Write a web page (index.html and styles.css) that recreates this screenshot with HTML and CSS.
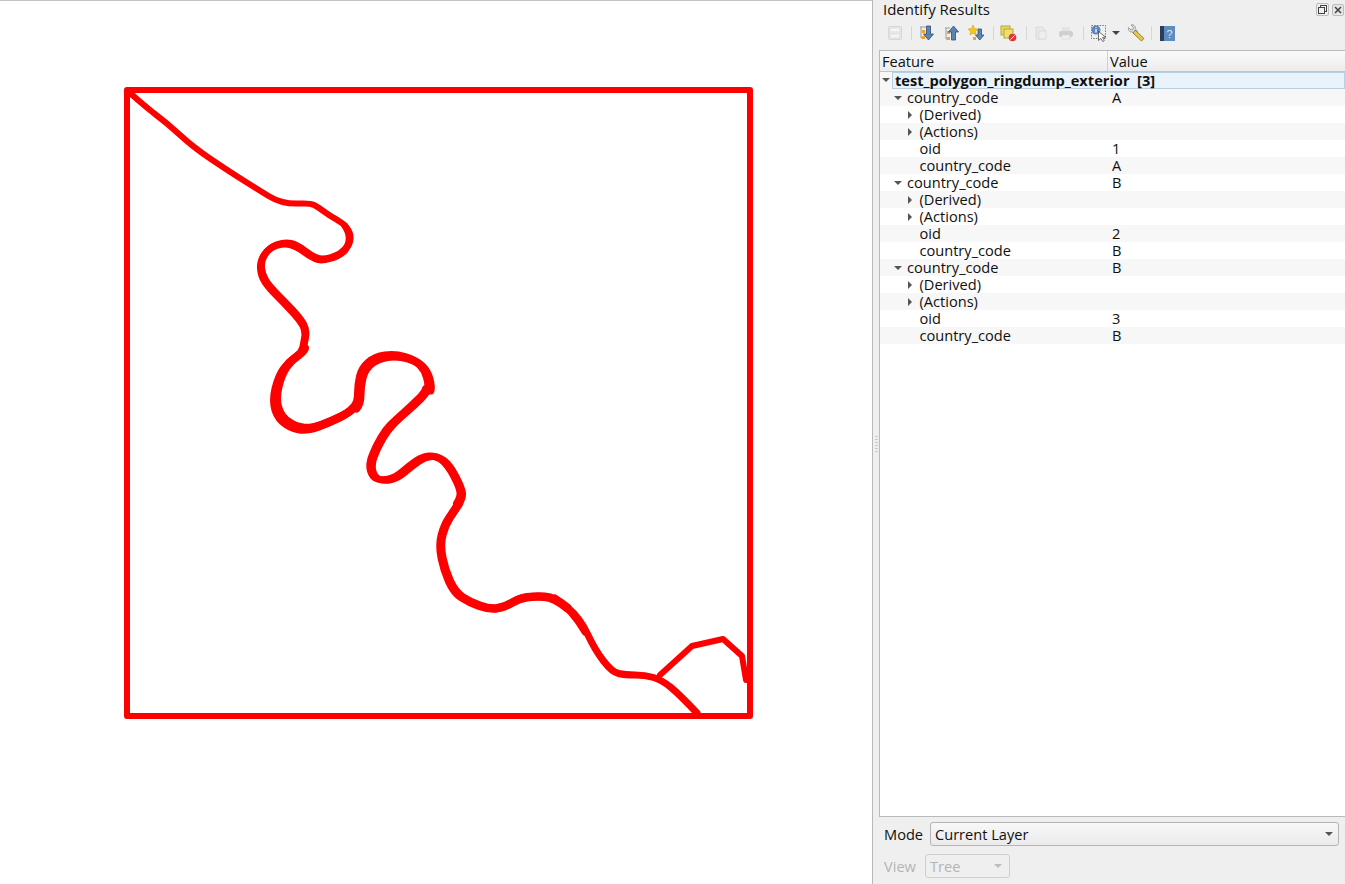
FILE: index.html
```html
<!DOCTYPE html>
<html lang="en">
<head>
<meta charset="utf-8">
<title>Identify Results</title>
<link rel="stylesheet" href="styles.css">
</head>
<body>
<div class="app">
  <main class="canvas">
    <svg class="map" viewBox="0 0 872 884" width="872" height="884">
      <defs>
        <path id="river-b" d="M345 250Q340 255 331 257.5Q322 260 317 258Q312 256 304.5 250.5Q297 245 291 243.5Q285 242 277.5 244.5Q270 247 265.5 253.5Q261 260 261.5 267.5Q262 275 266 281Q270 287 277.5 294.5Q285 302 292.5 310Q300 318 303.5 324Q307 330 305.5 337.5Q304 345 303.5 349"/>
        <path id="river-c" d="M303.5 349Q303 352 296.5 356.5Q290 361 285 368Q280 375 277 387.500Q274 400 277 409Q280 418 287.5 423Q295 428 302.5 428.5Q310 429 320 425.5Q330 422 340 417Q350 412 354 407"/>
        <path id="river-d" d="M354 407Q358 402 358 393.5Q358 385 360 376.5Q362 368 368.5 362.5Q375 357 385 355.5Q395 354 405 357Q415 360 420 365Q425 370 427 377.5Q429 385 428 389"/>
        <path id="river-e" d="M428 389Q427 393 421 399Q415 405 406.5 412.5Q398 420 393 425Q388 430 383 438.5Q378 447 374.5 456Q371 465 373 471.5Q375 478 380 479.5Q385 481 391.5 479.5Q398 478 405 472Q412 466 418.5 461.5Q425 457 431.5 456.5Q438 456 444 460.5Q450 465 456 476.5Q462 488 462.5 493Q463 498 459 504"/>
        <path id="river-f" d="M459 504Q455 510 450 517.5Q445 525 442.5 535Q440 545 442.5 557.5Q445 570 450 581Q455 592 462.5 597Q470 602 480 605.5Q490 609 497.5 608Q505 607 512.5 602.5Q520 598 527.5 597Q535 596 545 596.5Q555 597 567.5 607.5"/>
      </defs>
      <g class="feature">
        <path class="square" d="M127 90H750V716H127Z"/>
        <path class="thin" d="M127 91L133.500 96Q140 102 153 112.500Q167 123 180 135Q193 147 210 158.500Q230 172 246 182Q262 192 268.500 196Q275 200 282.500 202Q290 204 300 203.500Q310 203 314 205Q318 207 324 211.500Q330 216 336.500 219.500Q343 223 347 228Q351 233 350.500 239Q350 245 345 250"/>
        <path d="M345 226Q350 233 349 241Q348 248 342 252"/>
        <use href="#river-b"/>
        <use href="#river-b" transform="translate(-1 1)"/>
        <use class="wide" href="#river-c"/>
        <use class="wide" href="#river-c" transform="translate(-1.500 1.200)"/>
        <use class="wide" href="#river-c" transform="translate(1.500 -.8)"/>
        <use class="wide" href="#river-d"/>
        <use class="wide" href="#river-d" transform="translate(2.500 1.500)"/>
        <use href="#river-e"/>
        <use href="#river-e" transform="translate(-2.500 -.5)"/>
        <use class="wide" href="#river-f"/>
        <use class="wide" href="#river-f" transform="translate(-1 .5)"/>
        <path d="M555 598Q572 610 585 632"/>
        <path d="M567.500 607.500Q580 618 587.500 634Q595 650 603.500 661Q612 672 618.500 673.500Q625 675 635 675Q645 675 653.500 677.500Q662 680 671 687.500Q680 695 697 713"/>
        <path class="thin" d="M660 675L692 646L723 639L742 656L746 680L750 680"/>
      </g>
    </svg>
  </main>

  <aside class="panel">
    <span class="grip"></span>
    <header class="title-bar">
      <h1 class="title">Identify Results</h1>
      <div class="dock-buttons">
        <span class="dock-btn dock-float"><svg viewBox="0 0 11 11" width="11" height="11"><rect x="3.500" y="1.500" width="6" height="6" class="dk"/><rect x="1.500" y="3.500" width="6" height="6" class="dk"/></svg></span>
        <span class="dock-btn"><svg viewBox="0 0 12 12" width="12" height="12"><rect x=".5" y=".5" width="11" height="11" rx="1.500" class="dk3"/><path d="M3 3L9 9M9 3L3 9" class="dk2"/></svg></span>
      </div>
    </header>

    <div class="toolbar">
      <svg class="tool faded" viewBox="0 0 16 16" width="16" height="16"><rect x="2.500" y="1.500" width="13" height="13" rx="1" fill="#e4e4e4" stroke="#d4d4d4"/><path d="M5 5h8M5 11h8" stroke="#f7f7f7" stroke-width="2.500"/></svg>
      <i class="sep"></i>
      <svg class="tool" viewBox="0 0 16 16" width="16" height="16"><path d="M2 2h6M3 2v11h3" fill="none" stroke="#999"/><rect x="4" y="5" width="3" height="3" fill="#f0a030"/><rect x="4" y="11" width="3" height="3" fill="#f0a030"/><path d="M8.500 1h4v8h3L10.500 15 5.500 9h3Z" fill="#5b84b1" stroke="#2f4f73" stroke-width=".8"/></svg>
      <svg class="tool" viewBox="0 0 16 16" width="16" height="16"><path d="M2 3h5M3 3v11h3" fill="none" stroke="#999"/><rect x="4" y="6" width="3" height="3" fill="#f0a030"/><rect x="4" y="12" width="3" height="3" fill="#f0a030"/><path d="M8.500 15h4V7h3L10.500 1 5.500 7h3Z" fill="#5b84b1" stroke="#2f4f73" stroke-width=".8"/></svg>
      <svg class="tool" viewBox="0 0 16 16" width="16" height="16"><path d="M10 4h3.500v6H16l-4.200 5-4.300-5H10Z" fill="#5b84b1" stroke="#2f4f73" stroke-width=".8"/><path d="M5 0l1.500 3.500L10 4 7.500 6.500 8 10 5 8.200 2 10l.5-3.500L0 4l3.500-.5Z" fill="#f5c518" stroke="#c9a010" stroke-width=".5"/><rect x="5" y="12" width="3" height="3" fill="#f0a030"/></svg>
      <i class="sep"></i>
      <svg class="tool" viewBox="0 0 17 17" width="17" height="17"><rect x="1" y="1" width="9" height="9" fill="#e9d95e" stroke="#b8a83a"/><rect x="4" y="4" width="9" height="9" fill="#efe070" stroke="#b8a83a"/><circle cx="12.500" cy="12.500" r="3.800" fill="#d83a3a"/><path d="M10.500 14.500l4-4" stroke="#fff" stroke-width="1"/></svg>
      <i class="sep"></i>
      <svg class="tool" viewBox="0 0 16 16" width="16" height="16"><path d="M3 2h6l3 3v9H3Z" fill="#e9e9e9" stroke="#d8d8d8"/><rect x="6" y="6" width="7" height="8" fill="#eee" stroke="#dcdcdc"/></svg>
      <svg class="tool" viewBox="0 0 16 16" width="16" height="16"><rect x="4" y="2" width="8" height="4" fill="#e4e4e4"/><rect x="1" y="6" width="14" height="6" rx="2" fill="#cfcfcf"/><rect x="4" y="10" width="8" height="4" fill="#efefef" stroke="#d4d4d4" stroke-width=".6"/></svg>
      <i class="sep"></i>
      <svg class="tool" viewBox="0 0 18 18" width="18" height="18"><rect x="1.500" y="1.500" width="14" height="13" fill="none" stroke="#777" stroke-dasharray="1.500 1.200"/><circle cx="6" cy="6" r="4.500" fill="#5a86bd"/><path d="M6 3v.8M6 5v3.500" stroke="#fff" stroke-width="1.300"/><path d="M8.500 7.500l0 9 2.300-2 2 3 1.500-1-1.800-3 3-.5Z" fill="#fff" stroke="#333" stroke-width=".7"/></svg>
      <svg class="caret-small" viewBox="0 0 8 4" width="8" height="4"><path d="M0 0h8L4 4Z" fill="#444"/></svg>
      <svg class="tool" viewBox="0 0 18 18" width="18" height="18"><path d="M1.500 3.500L4 6l2-.5.500-2L4 1c2.500-.8 4.800 1.200 4.200 3.800L10.500 7 7.500 10 5 7.800C2.800 8.500.8 6 1.500 3.500Z" fill="#e8e8e8" stroke="#777" stroke-width=".7"/><path d="M8 6l9 8.500-2.500 2.500L6 9Z" fill="#e8c84a" stroke="#6e5d1c" stroke-width=".7"/></svg>
      <i class="sep sep-tight"></i>
      <svg class="tool tool-help" viewBox="0 0 15 15" width="15" height="15"><rect width="15" height="15" fill="#5d8cc0"/><rect width="4" height="15" fill="#2d3d52"/><text x="6.500" y="12" class="help-mark">?</text></svg>
    </div>

    <section class="tree">
      <div class="tree-head">
        <span class="col-feature">Feature</span>
        <span class="col-value">Value</span>
      </div>
      <div class="row root"><i class="arrow down a0"></i><span class="root-label">test_polygon_ringdump_exterior&nbsp; [3]</span></div>
      <div class="row alt"><span class="cell-f l1"><i class="arrow down"></i>country_code</span><span class="cell-v">A</span></div>
      <div class="row"><span class="cell-f l2"><i class="arrow right"></i>(Derived)</span><span class="cell-v"></span></div>
      <div class="row alt"><span class="cell-f l2"><i class="arrow right"></i>(Actions)</span><span class="cell-v"></span></div>
      <div class="row"><span class="cell-f l2">oid</span><span class="cell-v">1</span></div>
      <div class="row alt"><span class="cell-f l2">country_code</span><span class="cell-v">A</span></div>
      <div class="row"><span class="cell-f l1"><i class="arrow down"></i>country_code</span><span class="cell-v">B</span></div>
      <div class="row alt"><span class="cell-f l2"><i class="arrow right"></i>(Derived)</span><span class="cell-v"></span></div>
      <div class="row"><span class="cell-f l2"><i class="arrow right"></i>(Actions)</span><span class="cell-v"></span></div>
      <div class="row alt"><span class="cell-f l2">oid</span><span class="cell-v">2</span></div>
      <div class="row"><span class="cell-f l2">country_code</span><span class="cell-v">B</span></div>
      <div class="row alt"><span class="cell-f l1"><i class="arrow down"></i>country_code</span><span class="cell-v">B</span></div>
      <div class="row"><span class="cell-f l2"><i class="arrow right"></i>(Derived)</span><span class="cell-v"></span></div>
      <div class="row alt"><span class="cell-f l2"><i class="arrow right"></i>(Actions)</span><span class="cell-v"></span></div>
      <div class="row"><span class="cell-f l2">oid</span><span class="cell-v">3</span></div>
      <div class="row alt"><span class="cell-f l2">country_code</span><span class="cell-v">B</span></div>
    </section>

    <div class="form-row mode-row">
      <label class="form-label">Mode</label>
      <div class="combo combo-wide"><span>Current Layer</span><i class="combo-arrow"></i></div>
    </div>
    <div class="form-row view-row">
      <label class="form-label off">View</label>
      <div class="combo combo-off"><span>Tree</span><i class="combo-arrow"></i></div>
    </div>
  </aside>
</div>
</body>
</html>
```
FILE: styles.css
```css
* { box-sizing: border-box; }
html, body { margin: 0; height: 100%; }
body { font-family: "Open Sans", "Noto Sans", sans-serif; font-size: 14.6px; color: #101010; background: #efefef; overflow: hidden; }
.app { display: flex; width: 1345px; height: 884px; }

.canvas { width: 872px; height: 884px; background: #fff; border-top: 1px solid #c4c4c4; flex: none; overflow: hidden; }
.map { display: block; margin-top: -1px; }
.feature path, .feature use { fill: none; stroke: #ff0000; stroke-width: 7; stroke-linejoin: round; stroke-linecap: round; }
.feature .square, .feature .thin { stroke-width: 6; }
.feature .wide { stroke-width: 8; }

.panel { position: relative; width: 473px; height: 884px; flex: none; background: #efefef; border-left: 1px solid #b9b9b9; padding: 0 0 0 6px; display: flex; flex-direction: column; }
.grip { position: absolute; left: 2px; top: 436px; width: 3px; height: 18px; background: repeating-linear-gradient(#c9c9c9 0 1px, transparent 1px 3px); }

.title-bar { height: 20px; display: flex; align-items: center; justify-content: space-between; padding: 0 1px 1px 4px; }
.title { margin: 0; font-size: 15px; font-weight: 400; line-height: 19px; }
.dock-buttons { display: flex; gap: 2px; }
.dock-btn { width: 13px; height: 13px; display: flex; align-items: center; justify-content: center; }
.dock-float { border: 1px solid #bdbdbd; border-radius: 2px; }
.dk { fill: #efefef; stroke: #444; }
.dk2 { fill: none; stroke: #444; stroke-width: 1.6; }
.dk3 { fill: #e6e6e6; stroke: #bdbdbd; }

.toolbar { height: 30px; display: flex; align-items: center; padding: 0 0 4px 7px; }
.tool { flex: none; margin-right: 9px; }
.tool.faded { opacity: .9; }
.tool-help { margin-left: 2px; }
.sep { width: 1px; height: 14px; background: #d6d6d6; margin-right: 6px; flex: none; }
.sep-tight { margin-left: -3px; }
.caret-small { margin: 0 7px 0 -5px; flex: none; }
.help-mark { font-family: "Liberation Sans", sans-serif; font-size: 11px; fill: #dbe6f2; }

.tree { height: 767px; flex: none; background: #fff; border: 1px solid #b9b9b9; border-right: 0; overflow: hidden; }
.tree-head { height: 21px; display: flex; background: linear-gradient(#fafafa, #ececec); border-bottom: 1px solid #c4c4c4; line-height: 21px; }
.col-feature { width: 228px; padding-left: 2px; border-right: 1px solid #cfcfcf; }
.col-value { padding-left: 2px; }
.row { height: 17px; line-height: 17px; display: flex; background: #fff; }
.row.alt { background: #f7f7f7; }
.row.root { background: #f7f7f7; position: relative; padding-left: 12px; }
.root-label { flex: 1; background: #e8f3fb; border: 1px solid #b7cfe0; font-weight: 700; line-height: 15px; padding-left: 2px; white-space: nowrap; }
.cell-f { width: 229px; position: relative; flex: none; }
.cell-v { padding-left: 3px; }
.l1 { padding-left: 27px; }
.l2 { padding-left: 39.5px; }
.arrow { position: absolute; width: 0; height: 0; }
.arrow.down { left: 14px; top: 7px; border: 4px solid transparent; border-top: 4px solid #555; border-bottom: 0; }
.arrow.right { left: 28px; top: 5px; border: 4px solid transparent; border-left: 4px solid #555; border-right: 0; }
.arrow.a0 { left: 2px; top: 6px; }

.form-row { display: flex; align-items: center; padding-left: 5px; }
.mode-row { margin-top: 5px; height: 24px; }
.view-row { margin-top: 8px; height: 24px; }
.form-label { width: 46px; flex: none; }
.view-row .form-label { width: 41px; }
.form-label.off { color: #b4b4b4; }
.combo { height: 24px; display: flex; align-items: center; justify-content: space-between; padding: 0 5px 0 4px; background: linear-gradient(#f8f8f8, #ebebeb); border: 1px solid #b4b4b4; border-radius: 3px; }
.combo-wide { width: 409px; }
.combo-off { width: 85px; background: #efefef; border-color: #cfcfcf; color: #b4b4b4; padding-right: 7px; }
.combo-arrow { width: 0; height: 0; border: 4px solid transparent; border-top: 4px solid #555; border-bottom: 0; }
.combo-off .combo-arrow { border-top-color: #bdbdbd; }
```
